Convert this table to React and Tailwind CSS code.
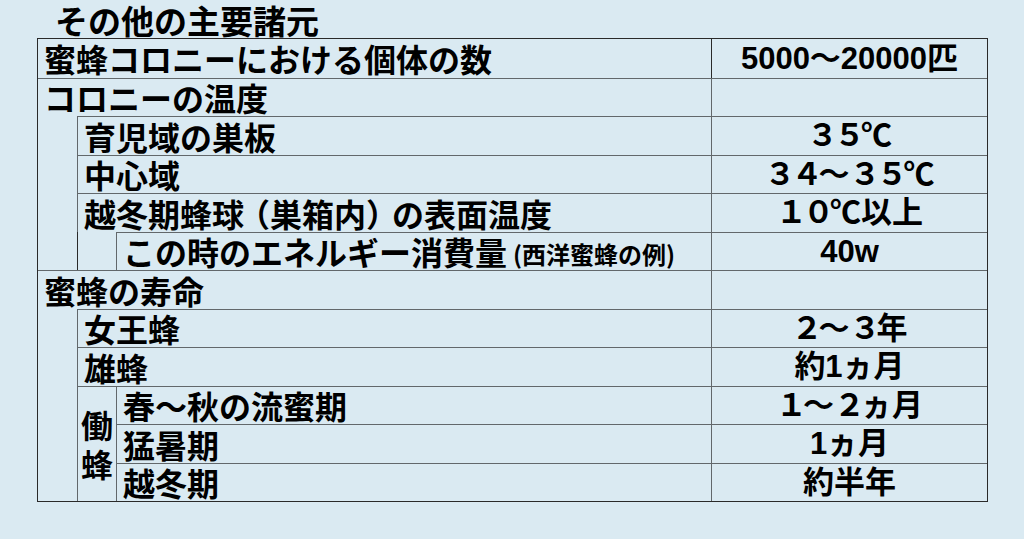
const D = ({ children }) => <span className="tracking-[-6px] mr-[2px]">{children}</span>;

export default function App() {
  const H = "border-t border-[#62686b]";
  const L = "border-l border-[#2a2a2a]";
  const lab = "flex items-center pl-[6px] text-[32px] leading-none font-bold text-black whitespace-nowrap";
  const val = "flex items-center justify-center text-[31px] leading-none font-bold text-black whitespace-nowrap";
  const jp = { fontFamily: '"Noto Sans CJK JP", sans-serif' };
  const vf = { fontFamily: '"Liberation Sans", "Noto Sans CJK JP", sans-serif' };
  return (
    <div className="w-[1024px] h-[539px] bg-[#daeaf2] overflow-hidden" style={jp}>
      <div className="h-[38px] pl-[55px] pt-[2px] flex items-center text-[33px] leading-[36px] font-bold text-black">
        その他の主要諸元
      </div>
      <div className="ml-[37px] w-[951px] h-[464px] border border-[#2a2a2a] grid grid-cols-[39px_39px_595px_1fr] grid-rows-12">
        <div className={`col-start-1 col-span-3 row-start-1 ${lab}`}>蜜蜂コロニーにおける個体の数</div>
        <div className={`col-start-4 row-start-1 ${L} ${val}`} style={vf}>5000～20000匹</div>

        <div className={`col-start-1 col-span-3 row-start-2 ${H} ${lab}`}>コロニーの温度</div>
        <div className={`col-start-4 row-start-2 ${H} ${L}`}></div>

        <div className="col-start-1 row-start-3 row-span-4"></div>
        <div className={`col-start-2 col-span-2 row-start-3 ${H} ${L} ${lab}`}>育児域の巣板</div>
        <div className={`col-start-4 row-start-3 ${H} ${L} ${val}`} style={vf}><D>３</D><D>５</D>℃</div>

        <div className={`col-start-2 col-span-2 row-start-4 ${H} ${L} ${lab}`}>中心域</div>
        <div className={`col-start-4 row-start-4 ${H} ${L} ${val}`} style={vf}><D>３</D><D>４</D>～<D>３</D><D>５</D>℃</div>

        <div className={`col-start-2 col-span-2 row-start-5 ${H} ${L} ${lab}`}>
          越冬期蜂球<span className="ml-[-6px]">（</span>巣箱内<span className="mr-[-6px]">）</span>の表面温度
        </div>
        <div className={`col-start-4 row-start-5 ${H} ${L} ${val}`} style={vf}><D>１</D><D>０</D>℃以上</div>

        <div className={`col-start-2 row-start-6 ${L}`}></div>
        <div className={`col-start-3 row-start-6 ${H} ${L} ${lab}`}>
          この時のエネルギー消費量<span className="text-[24px] pt-[6px] ml-[6px]">(西洋蜜蜂の例)</span>
        </div>
        <div className={`col-start-4 row-start-6 ${H} ${L} ${val}`} style={vf}>40w</div>

        <div className={`col-start-1 col-span-3 row-start-7 ${H} ${lab}`}>蜜蜂の寿命</div>
        <div className={`col-start-4 row-start-7 ${H} ${L}`}></div>

        <div className="col-start-1 row-start-8 row-span-5"></div>
        <div className={`col-start-2 col-span-2 row-start-8 ${H} ${L} ${lab}`}>女王蜂</div>
        <div className={`col-start-4 row-start-8 ${H} ${L} ${val}`} style={vf}><D>２</D>～<D>３</D>年</div>

        <div className={`col-start-2 col-span-2 row-start-9 ${H} ${L} ${lab}`}>雄蜂</div>
        <div className={`col-start-4 row-start-9 ${H} ${L} ${val}`} style={vf}>約1ヵ月</div>

        <div className={`col-start-2 row-start-10 row-span-3 ${H} ${L} flex flex-col items-center justify-center text-[32px] leading-[39px] font-bold text-black`}>
          <span>働</span>
          <span>蜂</span>
        </div>
        <div className={`col-start-3 row-start-10 ${H} ${L} ${lab}`}>春～秋の流蜜期</div>
        <div className={`col-start-4 row-start-10 ${H} ${L} ${val}`} style={vf}><D>１</D>～<D>２</D>ヵ月</div>

        <div className={`col-start-3 row-start-11 ${H} ${L} ${lab}`}>猛暑期</div>
        <div className={`col-start-4 row-start-11 ${H} ${L} ${val}`} style={vf}>1ヵ月</div>

        <div className={`col-start-3 row-start-12 ${H} ${L} ${lab}`}>越冬期</div>
        <div className={`col-start-4 row-start-12 ${H} ${L} ${val}`} style={vf}>約半年</div>
      </div>
    </div>
  );
}
